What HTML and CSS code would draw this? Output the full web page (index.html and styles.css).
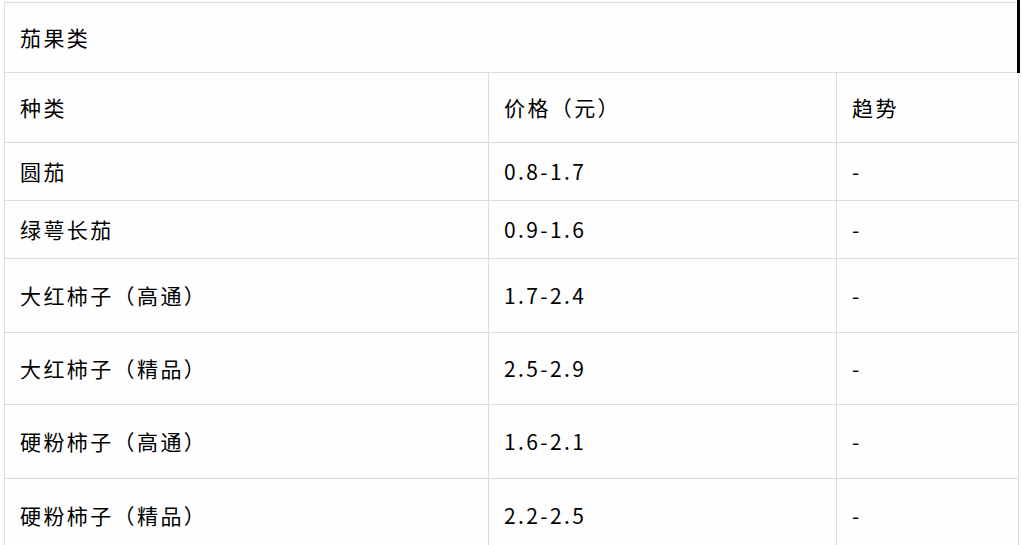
FILE: index.html
```html
<!DOCTYPE html>
<html lang="zh-CN">
<head>
<meta charset="utf-8">
<title>茄果类</title>
<link rel="stylesheet" href="styles.css">
</head>
<body>
<div class="wrap">
  <table class="price-table">
    <colgroup>
      <col class="c1">
      <col class="c2">
      <col class="c3">
    </colgroup>
    <tr class="r-title"><td colspan="3" class="title-cell">茄果类</td></tr>
    <tr class="r-head"><td>种类</td><td>价格（元）</td><td>趋势</td></tr>
    <tr class="r-s"><td>圆茄</td><td class="num">0.8-1.7</td><td>-</td></tr>
    <tr class="r-s"><td>绿萼长茄</td><td class="num">0.9-1.6</td><td>-</td></tr>
    <tr class="r-l"><td>大红柿子（高通）</td><td class="num">1.7-2.4</td><td>-</td></tr>
    <tr class="r-m"><td>大红柿子（精品）</td><td class="num">2.5-2.9</td><td>-</td></tr>
    <tr class="r-l"><td>硬粉柿子（高通）</td><td class="num">1.6-2.1</td><td>-</td></tr>
    <tr class="r-l"><td>硬粉柿子（精品）</td><td class="num">2.2-2.5</td><td>-</td></tr>
  </table>
  <div class="edge-bar"></div>
</div>
</body>
</html>
```

FILE: styles.css
```css
html, body {
  margin: 0;
  padding: 0;
  background: #ffffff;
}
body {
  font-family: "Noto Sans CJK SC", "Noto Sans", sans-serif;
  color: #000000;
}
.wrap {
  position: relative;
  padding: 2px 0 0 4px;
  width: 1014px;
}
.price-table {
  border-collapse: collapse;
  table-layout: fixed;
  width: 1014px;
  background: #fefefe;
}
.c1 { width: 484px; }
.c2 { width: 348px; }
.c3 { width: 182px; }
.price-table td {
  border: 1px solid #dcdcdc;
  padding: 0 15px 2px;
  font-size: 21px;
  letter-spacing: 2.4px;
  line-height: 24px;
  vertical-align: middle;
  white-space: nowrap;
}
.num {
  letter-spacing: 3.8px;
}
.r-title td { height: 67px; }
.r-head td { height: 67px; }
.r-s td { height: 55px; }
.r-l td { height: 71px; }
.r-m td { height: 69px; }
.title-cell {
  border-right-color: #ffffff;
}
.edge-bar {
  position: absolute;
  top: 0;
  left: 1017px;
  width: 3px;
  height: 73px;
  background: #000000;
}
```
